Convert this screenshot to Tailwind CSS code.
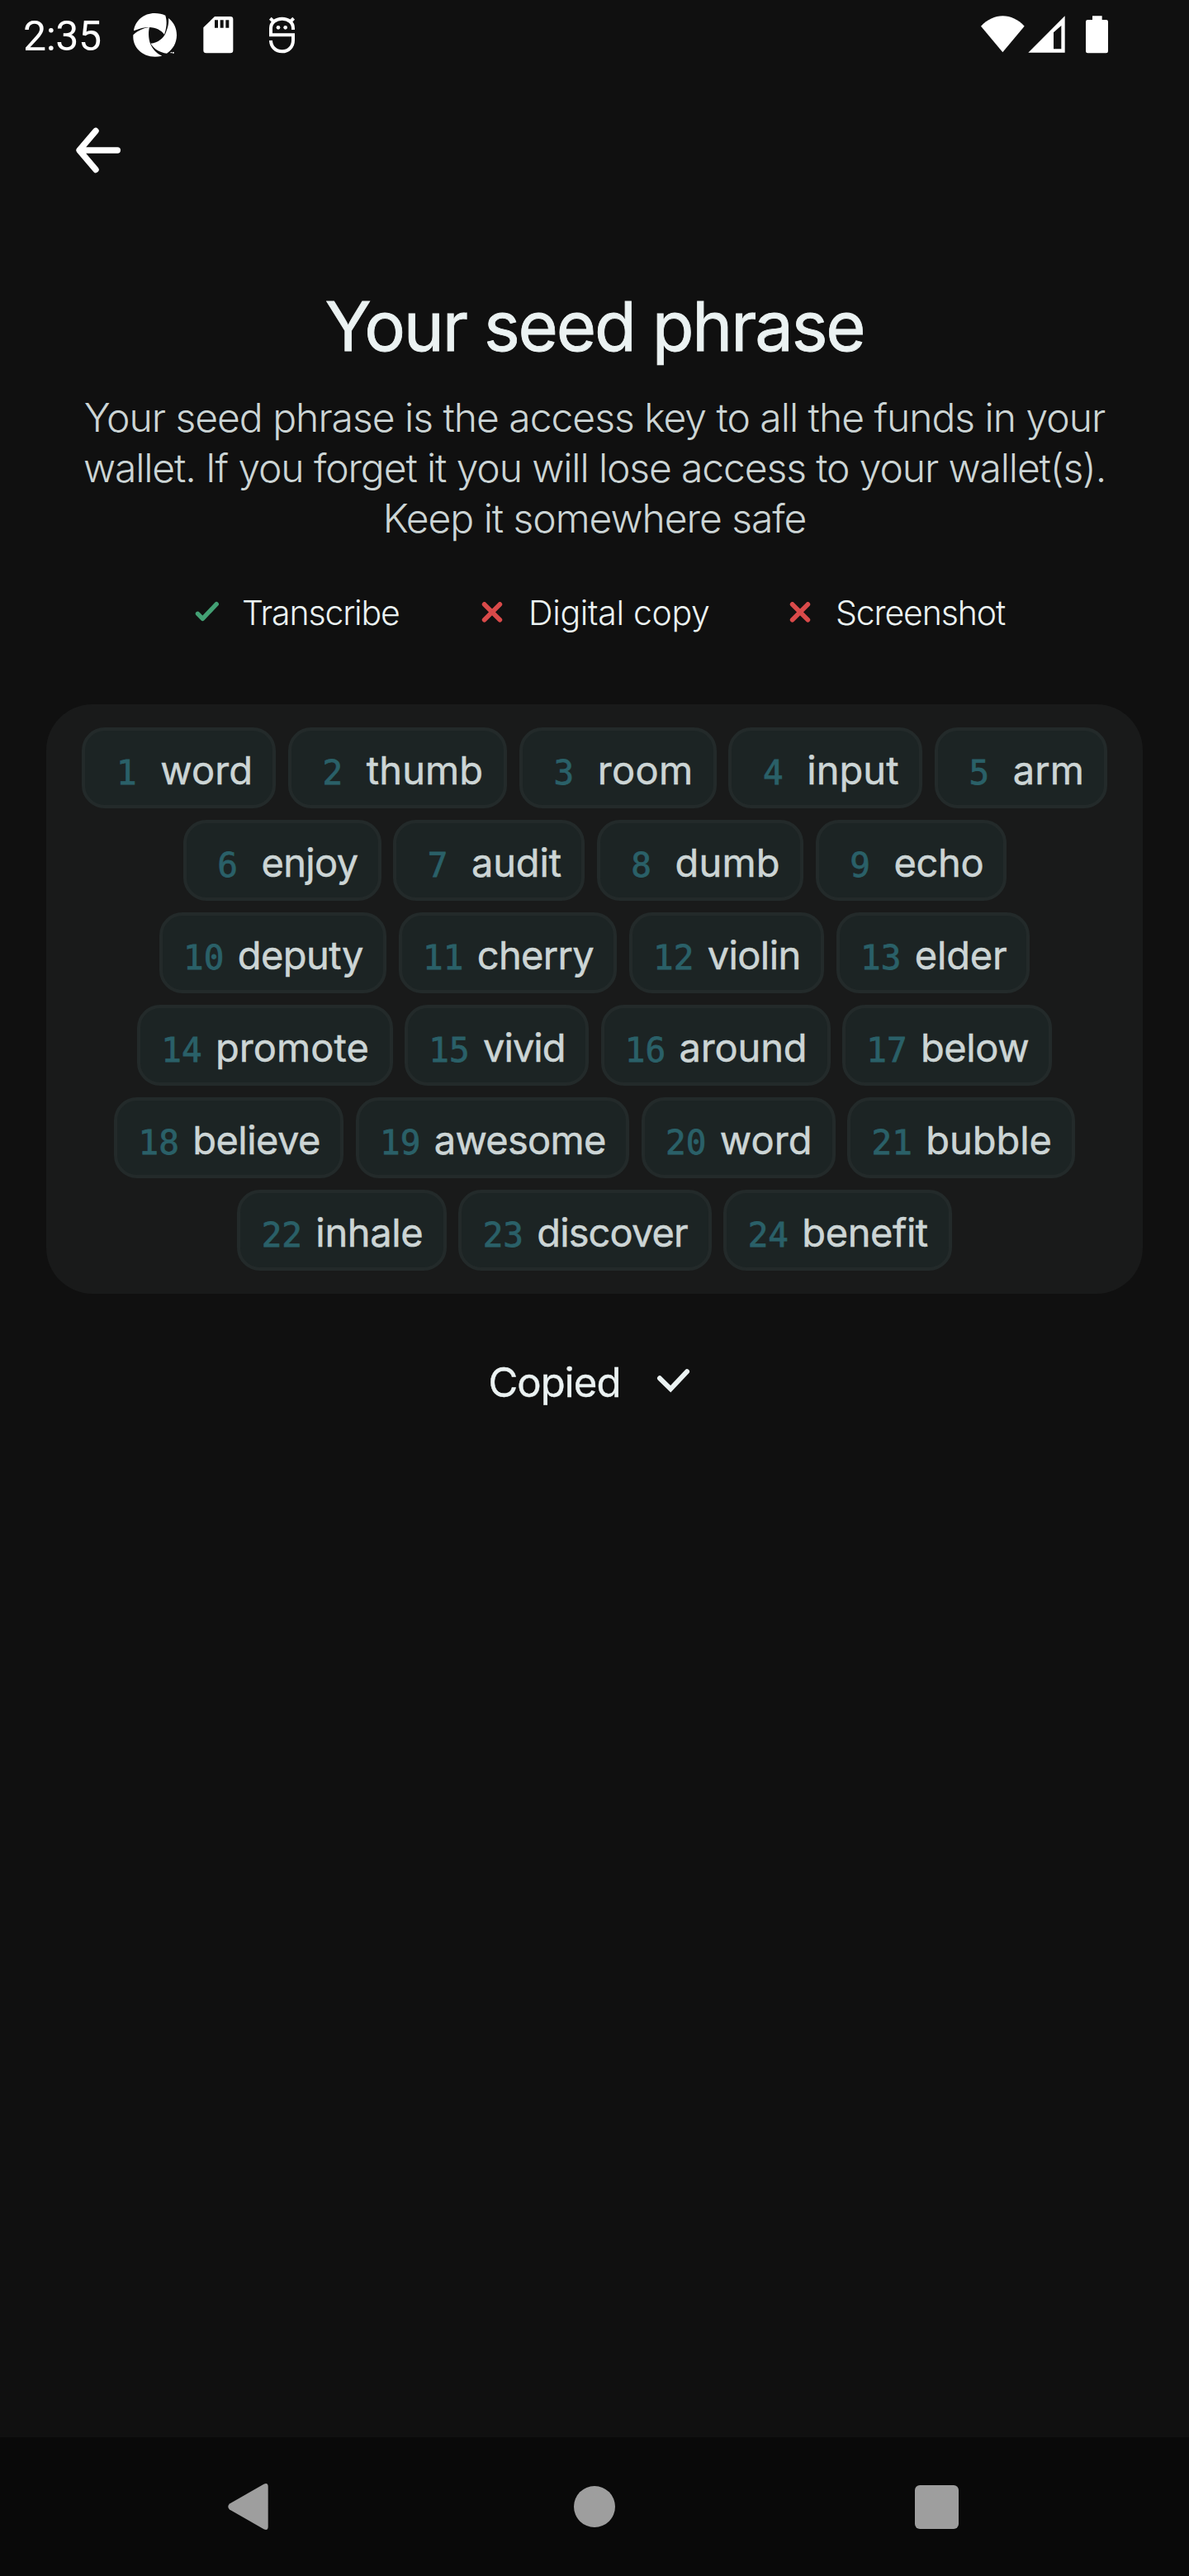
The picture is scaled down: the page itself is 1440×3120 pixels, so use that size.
<!DOCTYPE html>
<html lang="en">
<head>
<meta charset="utf-8">
<title>Your seed phrase</title>
<script src="https://cdn.jsdelivr.net/npm/@tailwindcss/browser@4"></script>
</head>
<body class="bg-[#101010]">
<div class="flex h-[3120px] w-[1440px] flex-col overflow-hidden bg-[#101010] font-['Inter',sans-serif] text-[#ebf2f2]">

  <!-- Status bar -->
  <header class="flex h-[88px] w-full shrink-0 items-center justify-between pr-[97px] pl-7 text-white">
    <div class="flex h-full items-center">
      <span class="w-[132px] font-['Roboto',sans-serif] text-[50px] leading-[88px] tracking-[-0.44px]">2:35</span>
      <svg class="h-[88px] w-[54px]" viewBox="480 0 162 264" fill="#fff">
        <path d="M486 112C491 75 522 48 562 48C577 48 590 51 601 56C608 80 605 103 597 125C580 103 545 86 486 112Z"/>
        <path d="M484 127C503 110 520 102 543 99C537 120 541 150 549 165C560 185 573 197 589 203C530 218 480 180 484 127Z"/>
        <path d="M612 66C632 82 642 102 642 128C642 155 628 180 606 194C580 190 562 180 547 158C575 156 594 138 602 120C611 98 614 82 612 66Z"/>
        <path d="M620 189h5v4h-5zM627 189h5v5h-5z"/>
      </svg>
      <svg class="ml-8 h-[88px] w-[37px]" viewBox="738 0 111 264" fill="#fff">
        <path fill-rule="evenodd" d="M780 60H837Q847 60 847 70V183Q847 193 837 193H749Q739 193 739 183V100ZM780 73V101H792V73ZM800 73V101H812V73ZM820 73V101H832V73Z"/>
      </svg>
      <svg class="ml-[42px] h-[88px] w-[33px]" viewBox="975 0 99 264" fill="none" stroke="#fff" stroke-width="12">
        <path d="M1065 108V103C1065 82 1048 68 1025 68S984 82 984 103V127H1065V146C1065 170 1048 187 1025 187S984 170 984 147"/>
        <path d="M982 67L996 80M1067 67L1053 80"/>
        <circle cx="1011" cy="100" r="7" fill="#fff" stroke="none"/>
        <circle cx="1037" cy="100" r="7" fill="#fff" stroke="none"/>
      </svg>
    </div>
    <svg class="h-[88px] w-[155px]" viewBox="84 0 465 264" fill="#fff">
      <path d="M84 95C130 45 197 45 242 95L163 190Z"/>
      <path fill-rule="evenodd" d="M256 191L389 58V191ZM348 118V178H376V93Z"/>
      <path d="M489 58H524V72H539Q546 72 546 79V186Q546 193 539 193H472Q465 193 465 186V79Q465 72 472 72H489Z"/>
    </svg>
  </header>

  <!-- Back button -->
  <nav class="flex h-[188px] w-full shrink-0 items-center pl-[88px]">
    <svg class="h-[62px] w-[62px]" viewBox="0 0 62 62" fill="none" stroke="#fff" stroke-width="7.4" stroke-linecap="round" stroke-linejoin="round">
      <path d="M28 7.5L8 31L28 54.5M9 31H54.3"/>
    </svg>
  </nav>

  <main class="flex flex-1 flex-col items-center">
    <h1 class="mt-[67px] text-[83px] leading-[104px] font-normal tracking-[-2.2px] whitespace-nowrap [-webkit-text-stroke:0.8px_#ebf2f2]">Your seed phrase</h1>

    <p class="mt-[28px] flex flex-col items-center text-[48px] leading-[61.2px] font-light whitespace-nowrap text-[#ccd5d5]">
      <span class="tracking-[-1.01px]">Your seed phrase is the access key to all the funds in your</span>
      <span class="tracking-[-1.11px]">wallet. If you forget it you will lose access to your wallet(s).</span>
      <span class="tracking-[-1.04px]">Keep it somewhere safe</span>
    </p>

    <ul class="mt-[53px] flex h-[60px] w-full items-center pl-[236px] text-[41px] leading-[60px] font-light whitespace-nowrap">
      <li class="flex w-[347px] items-center gap-[27px]">
        <svg class="h-[30px] w-[30px]" viewBox="0 0 30 30" fill="none" stroke="#43a074" stroke-width="5.4" stroke-linecap="round" stroke-linejoin="round"><path d="M3.5 16.3L9.4 22.3L26.2 4.7"/></svg>
        <span class="tracking-[-1.18px]">Transcribe</span>
      </li>
      <li class="flex w-[373px] items-center gap-[31px]">
        <svg class="h-[26px] w-[26px]" viewBox="0 0 26 26" fill="none" stroke="#d94a4a" stroke-width="5.6" stroke-linecap="round"><path d="M3.6 2.9L22.4 21.7M22.4 2.9L3.6 21.7"/></svg>
        <span class="tracking-[-0.32px]">Digital copy</span>
      </li>
      <li class="flex items-center gap-[30px]">
        <svg class="h-[26px] w-[26px]" viewBox="0 0 26 26" fill="none" stroke="#d94a4a" stroke-width="5.6" stroke-linecap="round"><path d="M3.6 2.9L22.4 21.7M22.4 2.9L3.6 21.7"/></svg>
        <span class="tracking-[-1.13px]">Screenshot</span>
      </li>
    </ul>

    <!-- Numbered words -->
    <section id="phrase" class="mt-[81px] flex h-[714px] w-[1328px] flex-col gap-[14px] rounded-[56px] bg-[#191a1a] py-7"></section>

    <button class="mt-[78px] flex h-[60px] items-center gap-[43px] pr-3 text-[49px] leading-[60px] whitespace-nowrap">
      <span class="tracking-[-0.92px] [-webkit-text-stroke:0.4px_#ebf2f2]">Copied</span>
      <svg class="h-[42px] w-[42px]" viewBox="0 0 42 42" fill="none" stroke="#ebf2f2" stroke-width="6" stroke-linecap="round"><path d="M4 15.3L17.2 28.3L37 7.3"/></svg>
    </button>
  </main>

  <!-- System navigation -->
  <footer class="flex h-[168px] w-full shrink-0 items-center bg-[#090909] pl-[276px]">
    <svg class="h-[56px] w-[49px]" viewBox="0 0 49 56" fill="#9e9e9e"><path d="M43.5 .8Q48.700 -1.500 48.700 4V52Q48.700 57.500 43.500 55.200L2 31.500Q-1.500 28 2 24.500Z"/></svg>
    <div class="ml-[370px] h-[50px] w-[50px] rounded-full bg-[#9e9e9e]"></div>
    <div class="ml-[363px] h-[53px] w-[53px] rounded-[6px] bg-[#9e9e9e]"></div>
  </footer>
</div>

<script>
  // Each entry: word, chip width, letter spacing
  const rows = [
    [['word',235,.1],['thumb',265.5,.12],['room',239,.35],['input',235,.05],['arm',209,.1]],
    [['enjoy',240,-.65],['audit',232,-.17],['dumb',250.5,.2],['echo',231,-.35]],
    [['deputy',275.5,-.58],['cherry',264.5,-.7],['violin',236.5,-.62],['elder',234.5,-.16]],
    [['promote',309.5,.07],['vivid',223,-.95],['around',278,-.16],['below',254,-.42]],
    [['believe',278,-.54],['awesome',331.5,-.72],['word',235,.1],['bubble',275.5,-.06]],
    [['inhale',253.5,-.34],['discover',306.5,-.9],['benefit',276.3,-.44]]
  ];
  let n = 0;
  document.getElementById('phrase').innerHTML = rows.map(r =>
    '<div class="flex justify-center gap-[14.5px]">' + r.map(([word, width, spacing]) =>
      `<div class="flex h-[98px] shrink-0 items-baseline gap-[16px] rounded-[28px] border-4 border-[#232a2a] bg-[#1c2424] pt-[18px] pl-[25px] whitespace-nowrap" style="width:${width}px">
        <span class="w-[50px] text-center font-['DejaVu_Sans_Mono',monospace] text-[41px] leading-[60px] text-[#2a6068] [-webkit-text-stroke:0.8px_#2a6068]">${++n}</span>
        <span class="text-[47px] leading-[60px] font-normal text-[#ccd5d5] [-webkit-text-stroke:0.5px_#ccd5d5]" style="letter-spacing:${spacing}px">${word}</span>
      </div>`).join('') + '</div>').join('');
</script>
</body>
</html>
